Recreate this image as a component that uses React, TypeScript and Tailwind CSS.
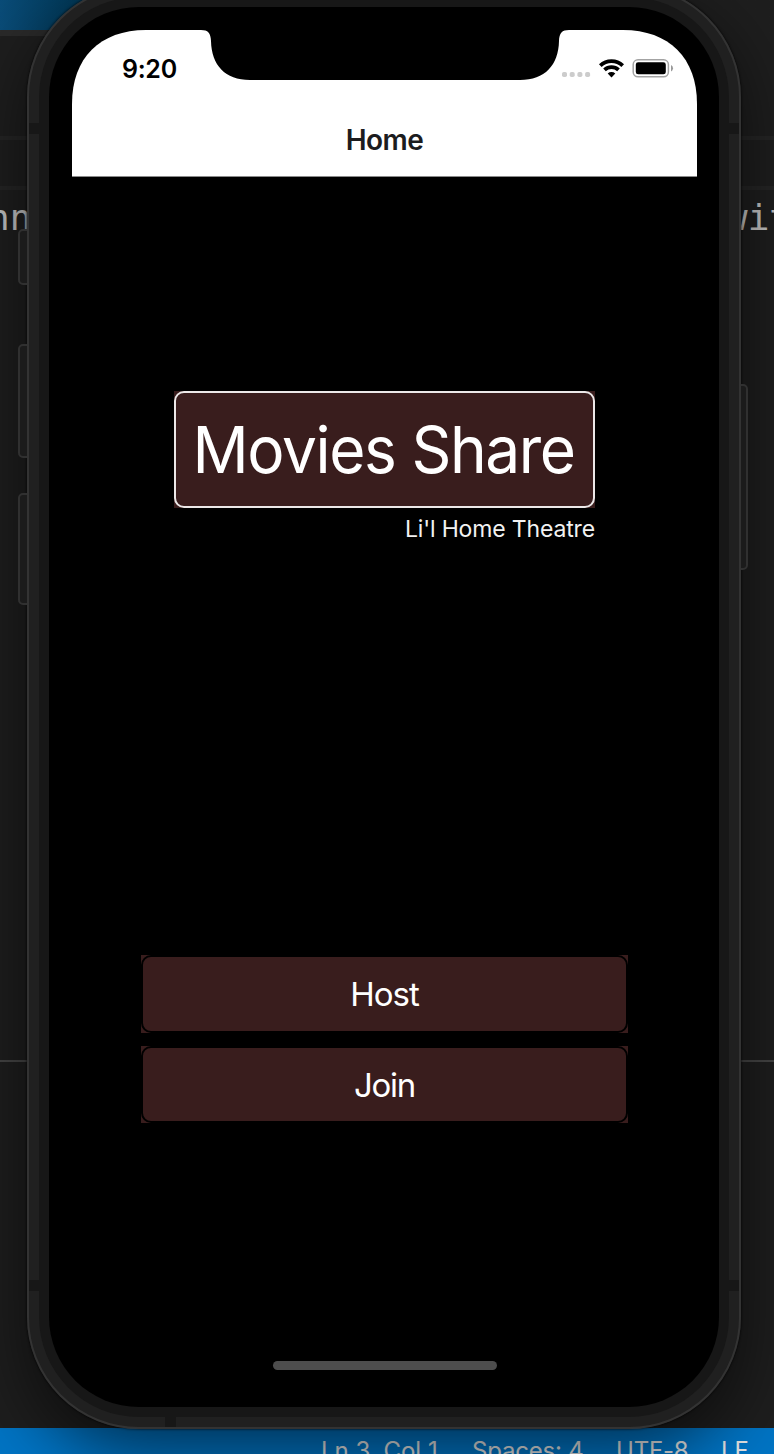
import React from "react";

function Editor() {
  return (
    <div className="flex h-full w-full flex-col bg-[#1e1e1e]">
      <div className="h-[30px] shrink-0 bg-linear-to-r from-[#0a4c78] via-[#003552] via-[100px] to-[#1e1e1e] to-[300px]" />
      <div className="h-[6px] shrink-0 bg-linear-to-r from-[#2a2a2a] from-[120px] to-[#1e1e1e] to-[300px]" />
      <div className="h-[100px] shrink-0" />
      <div className="h-[4px] shrink-0 bg-[#252525]" />
      <div className="h-[46px] shrink-0" />
      <div className="h-[4px] shrink-0 bg-[#252525]" />
      <div className="flex h-[54px] shrink-0 items-center justify-between overflow-hidden whitespace-pre pt-px font-['DejaVu_Sans_Mono',monospace] text-[36px] leading-none text-[#c4c4c4]">
        <span className="ml-[-12px]">nn</span>
        <span className="mr-[-17px]">wit</span>
      </div>
      <div className="h-[816px] shrink-0" />
      <div className="h-[2px] shrink-0 bg-[#454545]" />
      <div className="h-[366px] shrink-0" />
      <div className="flex h-[26px] shrink-0 items-start overflow-hidden whitespace-pre bg-[#0074c4] pl-[321px] pt-[9px] font-['Inter',sans-serif] text-[24px] leading-[28px] text-[#e4e4e4]">
        <span className="w-[151px] shrink-0 tracking-[0px]">Ln 3, Col 1</span>
        <span className="w-[144px] shrink-0 tracking-[-0.2px]">Spaces: 4</span>
        <span className="w-[105px] shrink-0 tracking-[-0.2px]">UTF-8</span>
        <span className="shrink-0">LF</span>
      </div>
    </div>
  );
}

function StatusIcons() {
  return (
    <svg width="114" height="20" viewBox="0 0 114 20" className="block">
      <g fill="#cccccc">
        <rect x="2" y="14" width="5" height="5" rx="1.8" />
        <rect x="9.7" y="14" width="5" height="5" rx="1.8" />
        <rect x="17.4" y="14" width="5" height="5" rx="1.8" />
        <rect x="25.1" y="14" width="5" height="5" rx="1.8" />
      </g>
      <g fill="none" stroke="#000" strokeWidth="3.8">
        <path d="M40.3 7.6 A16.2 16.2 0 0 1 62.7 7.6" />
        <path d="M44.5 11.9 A10.2 10.2 0 0 1 58.5 11.9" />
      </g>
      <path d="M51.5 19.4 L47.7 15.6 A5.6 5.6 0 0 1 55.3 15.6 Z" fill="#000" />
      <rect x="73.2" y="1.8" width="35.2" height="17" rx="4.8" fill="none" stroke="#a3a3a3" strokeWidth="1.5" />
      <rect x="75.8" y="4.3" width="30" height="12" rx="2.4" fill="#000" />
      <path d="M111 7 Q113 8 113 10.2 Q113 12.4 111 13.4 Z" fill="#999" />
    </svg>
  );
}

function Header() {
  return (
    <header className="relative h-[147px] shrink-0 border-b border-[#8a8a8a] bg-white font-['Inter',sans-serif] [clip-path:path('M0_147V74C0_28_28_0_74_0H551C597_0_625_28_625_74V147Z')]">
      <svg className="absolute left-0 top-0" width="625" height="52" viewBox="0 0 625 52">
        <path d="M129 -1V0C136 0 138.7 3 139 11C139.5 35 153 50 178 50H448C473 50 486.500 35 487 11C487.300 3 490 0 497 0V-1Z" fill="#000" />
      </svg>
      <div className="flex h-[76px] items-center justify-between pl-[50px] pr-[23px]">
        <span className="pt-[2px] text-[25px] font-semibold leading-none tracking-[-0.3px] text-black">9:20</span>
        <StatusIcons />
      </div>
      <h1 className="pt-[17px] text-center text-[28px] font-semibold leading-[35px] tracking-[-0.6px] text-[#1c1c1e]">Home</h1>
    </header>
  );
}

function MenuButton({ label, look }: { label: string; look: string }) {
  return (
    <button className="block w-full bg-[#391d1d]">
      <span className={"flex items-center justify-center rounded-[10px] border-2 border-black text-[33px] leading-none text-white " + look}>
        {label}
      </span>
    </button>
  );
}

function Screen() {
  return (
    <div className="flex h-[1354px] w-[625px] flex-col">
      <Header />
      <main className="flex flex-1 flex-col items-center pt-[214px] font-['Inter',sans-serif]">
        <div className="flex w-[421px] flex-col items-end">
          <div className="w-full bg-[#391d1d]">
            <div className="flex h-[117px] items-center justify-center whitespace-nowrap rounded-[10px] border-2 border-[#ece8e8] pr-[2px] text-[65px] leading-none tracking-[-1.5px] text-white">
              <span className="inline-block scale-x-[0.957]">Movies Share</span>
            </div>
          </div>
          <p className="mt-[7px] text-[23px] leading-[28px] tracking-[-0.15px] text-[#f2f2f2]">Li'l Home Theatre</p>
        </div>
        <div className="mt-[412px] flex w-[487px] flex-col gap-[13px]">
          <MenuButton label="Host" look="h-[78px] tracking-[-1px]" />
          <MenuButton label="Join" look="h-[77px] pt-px tracking-[-1.3px]" />
        </div>
        <div className="mt-[238px] h-[9px] w-[224px] rounded-full bg-[#4d4d4d]" />
      </main>
    </div>
  );
}

function SideButton({ place }: { place: string }) {
  return <div className={"absolute border-2 border-[#303030] bg-[#1b1b1b] " + place} />;
}

function Phone() {
  return (
    <div className="absolute left-[27px] top-[-15px] h-[1444px] w-[714px]">
      <div className="absolute inset-0 rounded-[112px] shadow-[0_24px_70px_rgba(0,0,0,0.58),0_0_2px_1px_rgba(0,0,0,0.45)]" />
      <SideButton place="left-[-9px] top-[244px] h-[56px] w-[14px] rounded-l-[5px]" />
      <SideButton place="left-[-9px] top-[359px] h-[114px] w-[14px] rounded-l-[5px]" />
      <SideButton place="left-[-9px] top-[508px] h-[112px] w-[14px] rounded-l-[5px]" />
      <SideButton place="right-[-7px] top-[399px] h-[186px] w-[14px] rounded-r-[5px]" />
      <div className="relative h-full rounded-[112px] border-2 border-[#333333] bg-[#202020] p-[10px]">
        <div className="absolute left-0 top-[136px] h-[11px] w-full bg-[#171717]" />
        <div className="absolute left-0 top-[1293px] h-[11px] w-full bg-[#171717]" />
        <div className="absolute bottom-0 left-[136px] h-[12px] w-[11px] bg-[#171717]" />
        <div className="relative h-full rounded-[100px] bg-[#171717] p-[10px]">
          <div className="h-full rounded-[90px] bg-black pl-[23px] pt-[23px]">
            <Screen />
          </div>
        </div>
      </div>
    </div>
  );
}

export default function App() {
  return (
    <div className="relative h-[1454px] w-[774px] overflow-hidden bg-[#1e1e1e]">
      <Editor />
      <Phone />
    </div>
  );
}
